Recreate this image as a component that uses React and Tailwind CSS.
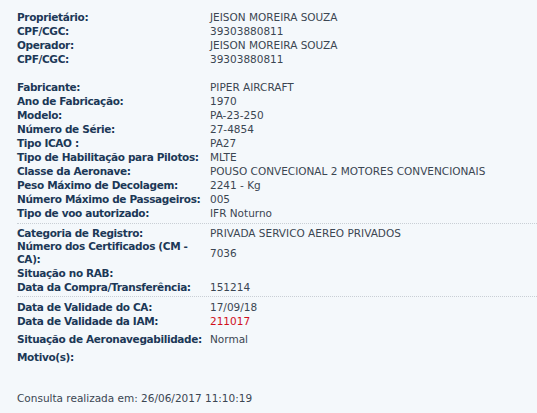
import React from 'react';

const Row = ({ label, value, valueClass = 'text-[#3b4652]', className = '' }) => (
  <div className={`grid grid-cols-[193px_1fr] items-center ${className}`}>
    <div className="font-bold text-[#1c3857] whitespace-nowrap tracking-[-0.35px]">{label}</div>
    <div className={valueClass}>{value}</div>
  </div>
);

const Divider = ({ className = '' }) => (
  <div className={`border-t border-dotted border-[#c9cfd5] ${className}`} />
);

export default function App() {
  return (
    <div
      className="w-[537px] h-[413px] bg-[#f4f8fb] pl-[17px] pt-[10px] text-[10.5px] leading-[14px] overflow-hidden"
      style={{ fontFamily: '"DejaVu Sans", Verdana, sans-serif' }}
    >
      <Row label="Proprietário:" value="JEISON MOREIRA SOUZA" />
      <Row label="CPF/CGC:" value="39303880811" />
      <Row label="Operador:" value="JEISON MOREIRA SOUZA" />
      <Row label="CPF/CGC:" value="39303880811" />
      <div className="h-[14px]" />
      <Row label="Fabricante:" value="PIPER AIRCRAFT" />
      <Row label="Ano de Fabricação:" value="1970" />
      <Row label="Modelo:" value="PA-23-250" />
      <Row label="Número de Série:" value="27-4854" />
      <Row label="Tipo ICAO :" value="PA27" />
      <Row label="Tipo de Habilitação para Pilotos:" value="MLTE" />
      <Row label="Classe da Aeronave:" value="POUSO CONVECIONAL 2 MOTORES CONVENCIONAIS" />
      <Row label="Peso Máximo de Decolagem:" value="2241 - Kg" />
      <Row label="Número Máximo de Passageiros:" value="005" />
      <Row label="Tipo de voo autorizado:" value="IFR Noturno" />
      <Divider className="mt-[3px] mb-[2px]" />
      <Row label="Categoria de Registro:" value="PRIVADA SERVICO AEREO PRIVADOS" />
      <div className="grid grid-cols-[193px_1fr] items-center leading-[13px]">
        <div className="font-bold text-[#1c3857] whitespace-nowrap tracking-[-0.35px]">
          Número dos Certificados (CM -
          <br />
          CA):
        </div>
        <div className="text-[#3b4652]">7036</div>
      </div>
      <Row label="Situação no RAB:" value="" />
      <Row label="Data da Compra/Transferência:" value="151214" />
      <Divider className="mt-[2px] mb-[3px]" />
      <Row label="Data de Validade do CA:" value="17/09/18" />
      <Row label="Data de Validade da IAM:" value="211017" valueClass="text-[#d0101b]" />
      <Row label="Situação de Aeronavegabilidade:" value="Normal" className="mt-[4px]" />
      <Row label="Motivo(s):" value="" className="mt-[4px]" />
      <div className="mt-[27px] text-[#3b4652]">Consulta realizada em: 26/06/2017 11:10:19</div>
    </div>
  );
}
